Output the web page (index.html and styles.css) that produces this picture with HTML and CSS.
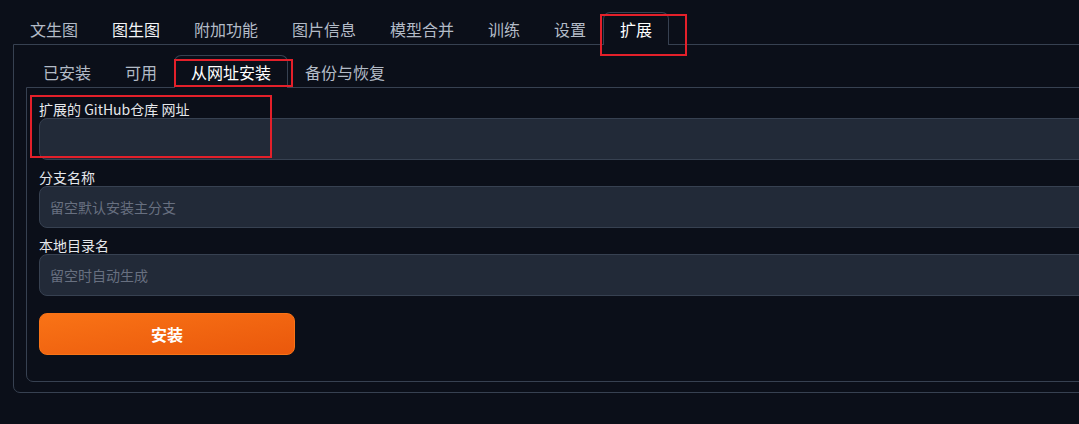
FILE: index.html
```html
<!DOCTYPE html>
<html lang="zh-CN">
<head>
<meta charset="utf-8">
<title>扩展</title>
<link rel="stylesheet" href="styles.css">
</head>
<body>
<div class="app">
  <div class="tabs-nav">
    <button class="tab">文生图</button>
    <button class="tab tab-hover">图生图</button>
    <button class="tab">附加功能</button>
    <button class="tab">图片信息</button>
    <button class="tab">模型合并</button>
    <button class="tab">训练</button>
    <button class="tab">设置</button>
    <button class="tab active">扩展</button>
  </div>
  <div class="panel outer">
    <div class="tabs-nav">
      <button class="tab">已安装</button>
      <button class="tab">可用</button>
      <button class="tab active">从网址安装</button>
      <button class="tab">备份与恢复</button>
    </div>
    <div class="panel inner">
      <div class="field">
        <label class="label">扩展的 GitHub仓库 网址</label>
        <input class="input" type="text">
      </div>
      <div class="field">
        <label class="label">分支名称</label>
        <input class="input" type="text" placeholder="留空默认安装主分支">
      </div>
      <div class="field">
        <label class="label">本地目录名</label>
        <input class="input" type="text" placeholder="留空时自动生成">
      </div>
      <button class="btn-primary">安装</button>
    </div>
  </div>
</div>
<div class="mark mark-tab"></div>
<div class="mark mark-subtab"></div>
<div class="mark mark-field"></div>
</body>
</html>
```

FILE: styles.css
```css
html, body {
  margin: 0;
  padding: 0;
  background: #0b0f19;
  overflow: hidden;
  height: 100%;
}
body {
  position: relative;
  font-family: "Noto Sans CJK SC", "Noto Sans", sans-serif;
  color: #e5e7eb;
}
.app {
  width: 1200px;
  padding: 12px 0 0 13px;
}
.tabs-nav {
  display: flex;
  height: 32px;
}
.tab {
  position: relative;
  z-index: 1;
  height: 33px;
  margin: 0 0 -1px 0;
  padding: 0 16px;
  border: 1px solid transparent;
  border-bottom: none;
  border-radius: 7px 7px 0 0;
  background: transparent;
  font-family: inherit;
  font-size: 16px;
  line-height: 31px;
  color: #b3bbc7;
  cursor: pointer;
}
.tab-hover {
  color: #f3f4f6;
}
.tab.active {
  border-color: #374151;
  background: #0b0f19;
  color: #ffffff;
}
.panel {
  border: 1px solid #374151;
  border-radius: 0 7px 7px 7px;
}
.outer {
  padding: 10px 0 10px 12px;
}
.inner {
  padding: 12px 0 26px 12px;
  display: flex;
  flex-direction: column;
  align-items: flex-start;
}
.field {
  display: flex;
  flex-direction: column;
  width: 100%;
  margin-bottom: 8px;
}
.label {
  font-size: 14px;
  line-height: 18px;
  color: #e5e7eb;
}
.input {
  box-sizing: border-box;
  height: 42px;
  width: 100%;
  margin: 0;
  padding: 0 10px;
  border: 1px solid #374151;
  border-radius: 8px;
  background: #222a38;
  font-family: inherit;
  font-size: 14px;
  color: #e5e7eb;
  outline: none;
}
.input::placeholder {
  color: #687080;
}
.btn-primary {
  box-sizing: border-box;
  margin-top: 9px;
  width: 256px;
  height: 42px;
  border: 1px solid #f97316;
  border-radius: 8px;
  background: linear-gradient(to bottom right, #f97316, #ea580c);
  color: #ffffff;
  font-family: inherit;
  font-size: 16px;
  font-weight: 700;
  cursor: pointer;
}
.mark {
  position: absolute;
  z-index: 10;
  border: 2px solid #e4202a;
  pointer-events: none;
}
.mark-tab {
  left: 600px;
  top: 14px;
  width: 83px;
  height: 38px;
}
.mark-subtab {
  left: 174px;
  top: 59px;
  width: 115px;
  height: 24px;
}
.mark-field {
  left: 30px;
  top: 95px;
  width: 238px;
  height: 59px;
}
```
